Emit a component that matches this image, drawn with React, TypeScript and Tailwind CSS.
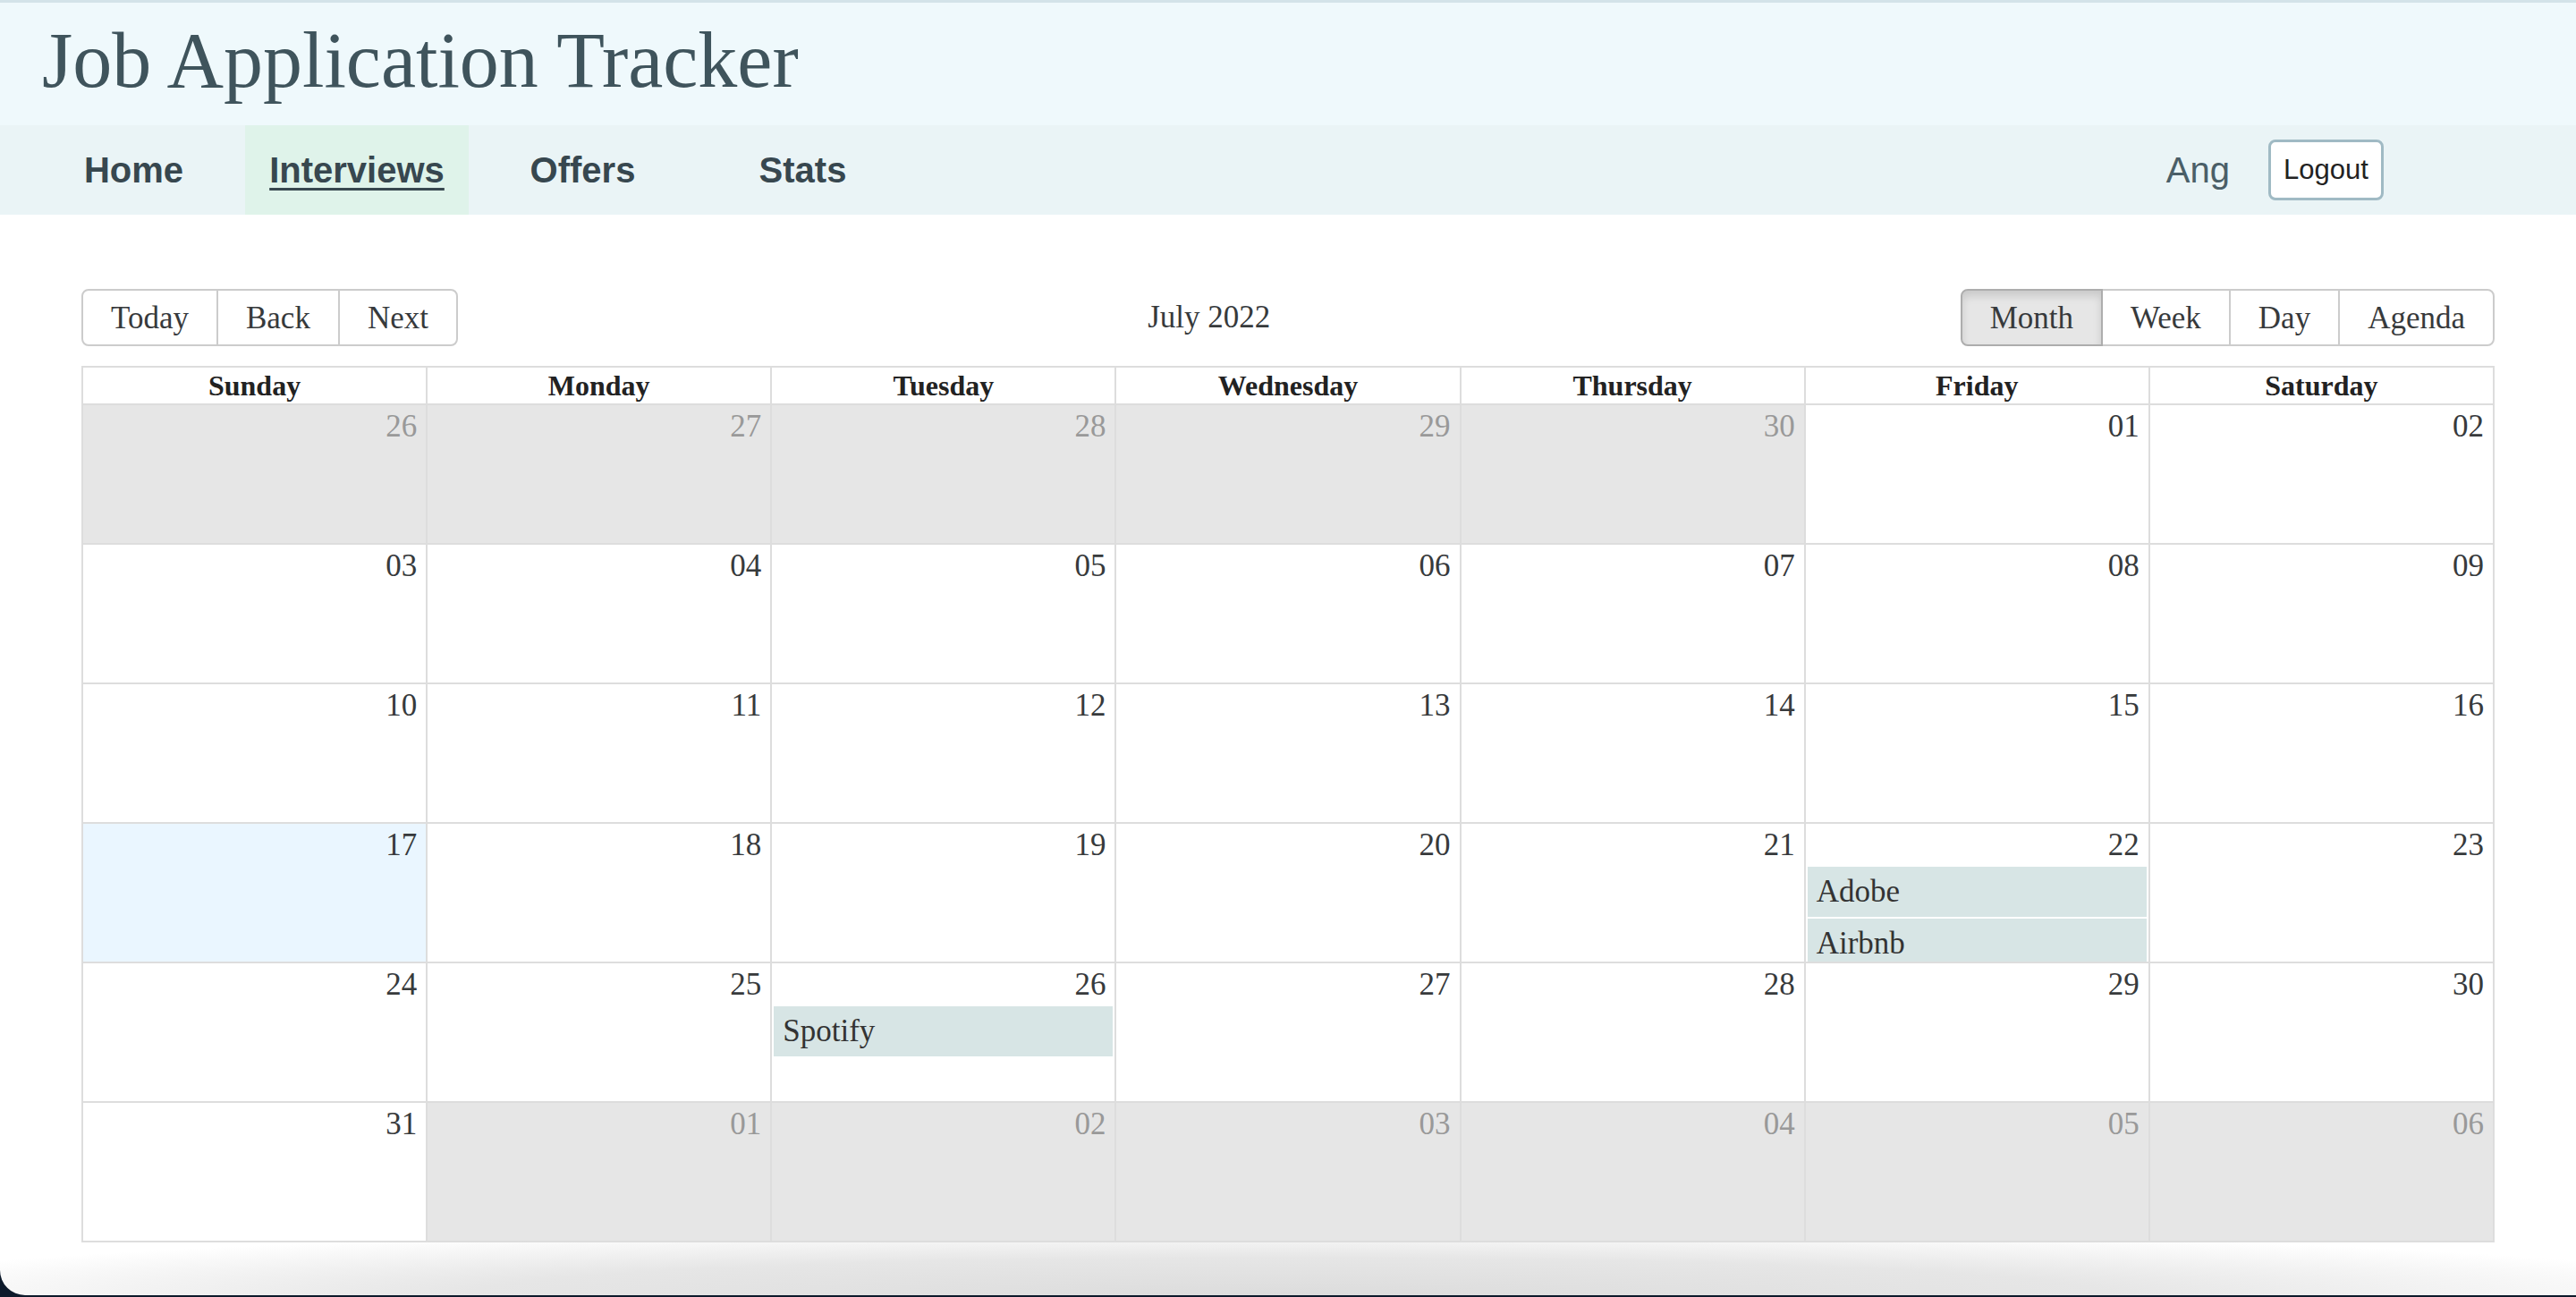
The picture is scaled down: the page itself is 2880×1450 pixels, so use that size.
import React from 'react';

type Day = { label: string; off?: boolean; today?: boolean; events?: string[] };

// July 2022, month grid as shown
const weeks: Day[][] = [
  [
    { label: '26', off: true },
    { label: '27', off: true },
    { label: '28', off: true },
    { label: '29', off: true },
    { label: '30', off: true },
    { label: '01' },
    { label: '02' },
  ],
  [{ label: '03' }, { label: '04' }, { label: '05' }, { label: '06' }, { label: '07' }, { label: '08' }, { label: '09' }],
  [{ label: '10' }, { label: '11' }, { label: '12' }, { label: '13' }, { label: '14' }, { label: '15' }, { label: '16' }],
  [
    { label: '17', today: true },
    { label: '18' },
    { label: '19' },
    { label: '20' },
    { label: '21' },
    { label: '22', events: ['Adobe', 'Airbnb'] },
    { label: '23' },
  ],
  [
    { label: '24' },
    { label: '25' },
    { label: '26', events: ['Spotify'] },
    { label: '27' },
    { label: '28' },
    { label: '29' },
    { label: '30' },
  ],
  [
    { label: '31' },
    { label: '01', off: true },
    { label: '02', off: true },
    { label: '03', off: true },
    { label: '04', off: true },
    { label: '05', off: true },
    { label: '06', off: true },
  ],
];

const dayNames = ['Sunday', 'Monday', 'Tuesday', 'Wednesday', 'Thursday', 'Friday', 'Saturday'];

function ToolbarButton({ label, active, first, last }: { label: string; active?: boolean; first?: boolean; last?: boolean }) {
  return (
    <button
      className={[
        'h-[64px] px-[31px] border-2 text-[35px] leading-none text-[#373a3c]',
        first ? 'rounded-l-[8px]' : '-ml-[2px]',
        last ? 'rounded-r-[8px]' : '',
        active
          ? 'relative z-10 bg-[#e6e6e6] border-[#adadad] shadow-[inset_0_6px_10px_rgba(0,0,0,0.125)]'
          : 'bg-white border-[#cccccc]',
      ].join(' ')}
    >
      {label}
    </button>
  );
}

function DayCell({ day, first }: { day: Day; first: boolean }) {
  return (
    <div
      className={[
        'flex-1 basis-0 overflow-hidden',
        first ? '' : 'border-l-2 border-[#dddddd]',
        day.off ? 'bg-[#e6e6e6]' : day.today ? 'bg-[#eaf6ff]' : 'bg-white',
      ].join(' ')}
    >
      <div className={`h-[48px] pr-[10px] text-right leading-[48px] ${day.off ? 'text-[#999999]' : 'text-[#373a3c]'}`}>
        {day.label}
      </div>
      {day.events?.map((ev) => (
        <div key={ev} className="mx-[2px] mb-[2px] h-[56px] bg-[#d7e5e5] px-[10px] leading-[56px] text-[#333333]">
          {ev}
        </div>
      ))}
    </div>
  );
}

export default function App() {
  return (
    <div className="h-[1450px] w-[2880px] overflow-hidden bg-[#0d1a2b] font-['Liberation_Serif',serif]">
      {/* Title band */}
      <header className="flex h-[140px] items-center border-t-[3px] border-[#d3e3e9] bg-[#eff9fc] pb-[8px] pl-[47px]">
        <h1 className="text-[88px] leading-none text-[#3f545c]">Job Application Tracker</h1>
      </header>

      {/* Nav */}
      <nav className="flex h-[100px] items-stretch bg-[#eaf4f6] font-['Liberation_Sans',Arial,sans-serif] text-[40px]">
        <div className="ml-[61px] flex gap-[36px] font-bold text-[#37474f]">
          <a className="flex w-[177px] items-center justify-center">Home</a>
          <a className="flex w-[250px] items-center justify-center bg-[#dff3ea] underline decoration-[3px] underline-offset-[6px]">
            Interviews
          </a>
          <a className="flex w-[183px] items-center justify-center">Offers</a>
          <a className="ml-[37px] flex w-[163px] items-center justify-center">Stats</a>
        </div>
        <div className="ml-auto mr-[215px] flex items-center">
          <span className="text-[#4a5e67]">Ang</span>
          <button className="ml-[43px] h-[68px] w-[129px] rounded-[8px] border-[3px] border-[#a0bac4] bg-white text-[31px] text-[#222222]">
            Logout
          </button>
        </div>
      </nav>

      {/* Calendar */}
      <main className="bg-white px-[91px] pt-[83px] text-[35px] text-[#373a3c]">
        <div className="mb-[22px] flex items-center">
          <div className="flex">
            <ToolbarButton label="Today" first />
            <ToolbarButton label="Back" />
            <ToolbarButton label="Next" last />
          </div>
          <span className="flex-1 text-center">July 2022</span>
          <div className="flex">
            <ToolbarButton label="Month" first active />
            <ToolbarButton label="Week" />
            <ToolbarButton label="Day" />
            <ToolbarButton label="Agenda" last />
          </div>
        </div>

        <div className="border-2 border-[#dddddd]">
          <div className="flex h-[42px] border-b-2 border-[#dddddd]">
            {dayNames.map((d, i) => (
              <div
                key={d}
                className={`flex flex-1 basis-0 items-center justify-center text-[32px] font-bold text-[#222222] ${i ? 'border-l-2 border-[#dddddd]' : ''}`}
              >
                {d}
              </div>
            ))}
          </div>
          {weeks.map((week, wi) => (
            <div key={wi} className={`flex h-[154px] ${wi ? 'box-content border-t-2 border-[#dddddd]' : ''}`}>
              {week.map((day, di) => (
                <DayCell key={di} day={day} first={di === 0} />
              ))}
            </div>
          ))}
        </div>
      </main>

      {/* shadow of the next panel */}
      <div className="h-[59px] rounded-bl-[28px] bg-[radial-gradient(ellipse_58%_130%_at_50%_100%,#dcdcdc_0%,#e6e6e6_55%,#ffffff_100%)]" />
    </div>
  );
}
